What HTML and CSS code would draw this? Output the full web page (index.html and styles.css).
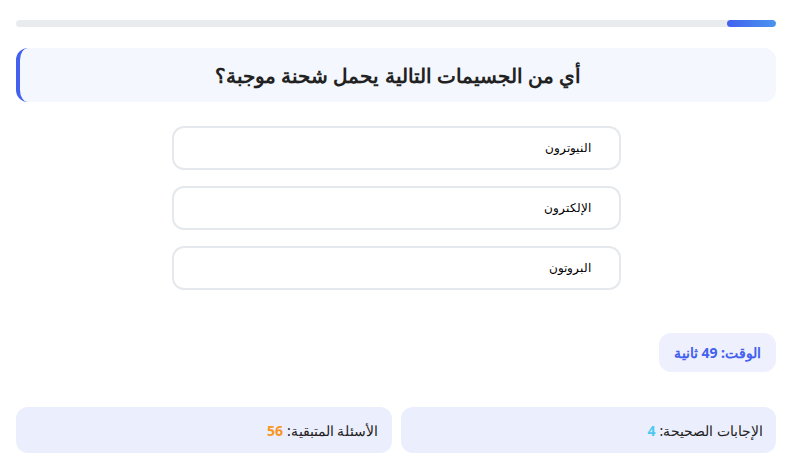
FILE: index.html
```html
<!DOCTYPE html>
<html lang="ar" dir="rtl">
  <head>
    <meta charset="utf-8">
    <title>اختبار</title>
    <link rel="stylesheet" href="styles.css">
  </head>
  <body>
    <div class="quiz">

      <div class="progress">
        <div class="progress-fill" style="width: 6.5%"></div>
      </div>

      <div class="question">
        <h2>أي من الجسيمات التالية يحمل شحنة موجبة؟</h2>
      </div>

      <div class="options">
        <button class="option">النيوترون</button>
        <button class="option">الإلكترون</button>
        <button class="option">البروتون</button>
      </div>

      <div class="timer-row">
        <div class="timer">الوقت: 49 ثانية</div>
      </div>

      <div class="stats">
        <div class="stat">الإجابات الصحيحة: <span class="correct">4</span></div>
        <div class="stat">الأسئلة المتبقية: <span class="left">56</span></div>
      </div>

    </div>
  </body>
</html>
```

FILE: styles.css
```css
body {
  margin: 0;
  background: #ffffff;
  font-family: "Noto Sans", sans-serif;
  color: #222;
}

.quiz
{
  display: flex;
  flex-direction: column;
  padding: 20px 16px 0 16px;
}

.progress
{
  height: 7px;
  background: #e9ecef;
  border-radius: 4px;
  overflow: hidden;
  display: flex;
}

.progress-fill
{
  height: 100%;
  background: linear-gradient(to left, #4895ef, #4361ee);
  border-radius: 4px;
}

.question
{
  margin-top: 21px;
  height: 54px;
  background: #f4f7fe;
  border-left: 4px solid #4361ee;
  border-radius: 12px;
  display: flex;
  align-items: center;
  justify-content: center;
}

.question h2
{
  margin: 0;
  font-size: 20px;
  font-weight: 700;
  color: #222;
}

.options
{
  display: flex;
  flex-direction: column;
  gap: 16px;
  align-items: center;
  margin-top: 24px;
}

.option
{
  width: 449px;
  height: 44px;
  background: #fff;
  border: 2px solid #e5e8ec;
  border-radius: 12px;
  text-align: right;
  padding: 0 28px;
  color: #000;
  font-size: 11.5px;
}

.timer-row
{
  display: flex;
  margin-top: 43px;
}

.timer
{
  background: #eef0fd;
  color: #4361ee;
  font-weight: 700;
  font-size: 14px;
  border-radius: 12px;
  padding: 0 15px;
  height: 39px;
  display: flex;
  align-items: center;
}

.stats
{
  display: grid;
  grid-template-columns: 1fr 1fr;
  gap: 9px;
  margin-top: 35px;
}

.stat
{
  background: #ebeefc;
  border-radius: 12px;
  height: 46px;
  display: flex;
  align-items: center;
  padding: 0 13px;
  font-size: 14px;
  gap: 4px;
}

.correct
{
  color: #4cc9f0;
  font-weight: 700;
}

.left
{
  color: #f8961e;
  font-weight: 700;
}
```
